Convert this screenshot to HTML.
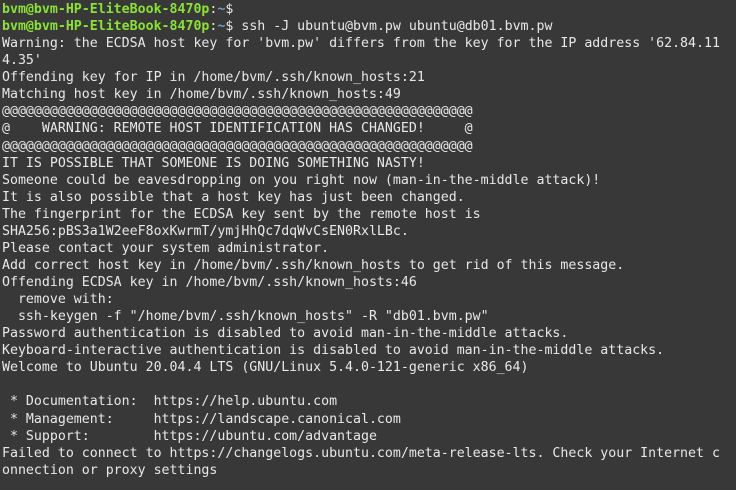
<!DOCTYPE html>
<html><head><meta charset="utf-8"><style>
html,body{margin:0;padding:0;background:#383838;width:736px;height:490px;overflow:hidden}
pre{margin:0;padding:1px 0 0 2px;font-family:"DejaVu Sans Mono","Liberation Mono",monospace;font-size:13.25px;line-height:17.07px;color:#e8e8e8;white-space:pre}
.g{color:#8ae234;font-weight:bold}
.b{color:#729fcf;font-weight:bold}
</style></head><body><pre><span class="g">bvm@bvm-HP-EliteBook-8470p</span>:<span class="b">~</span>$
<span class="g">bvm@bvm-HP-EliteBook-8470p</span>:<span class="b">~</span>$ ssh -J ubuntu@bvm.pw ubuntu@db01.bvm.pw
Warning: the ECDSA host key for 'bvm.pw' differs from the key for the IP address '62.84.11
4.35'
Offending key for IP in /home/bvm/.ssh/known_hosts:21
Matching host key in /home/bvm/.ssh/known_hosts:49
@@@@@@@@@@@@@@@@@@@@@@@@@@@@@@@@@@@@@@@@@@@@@@@@@@@@@@@@@@@
@    WARNING: REMOTE HOST IDENTIFICATION HAS CHANGED!     @
@@@@@@@@@@@@@@@@@@@@@@@@@@@@@@@@@@@@@@@@@@@@@@@@@@@@@@@@@@@
IT IS POSSIBLE THAT SOMEONE IS DOING SOMETHING NASTY!
Someone could be eavesdropping on you right now (man-in-the-middle attack)!
It is also possible that a host key has just been changed.
The fingerprint for the ECDSA key sent by the remote host is
SHA256:pBS3a1W2eeF8oxKwrmT/ymjHhQc7dqWvCsEN0RxlLBc.
Please contact your system administrator.
Add correct host key in /home/bvm/.ssh/known_hosts to get rid of this message.
Offending ECDSA key in /home/bvm/.ssh/known_hosts:46
  remove with:
  ssh-keygen -f "/home/bvm/.ssh/known_hosts" -R "db01.bvm.pw"
Password authentication is disabled to avoid man-in-the-middle attacks.
Keyboard-interactive authentication is disabled to avoid man-in-the-middle attacks.
Welcome to Ubuntu 20.04.4 LTS (GNU/Linux 5.4.0-121-generic x86_64)

 * Documentation:  https://help.ubuntu.com
 * Management:     https://landscape.canonical.com
 * Support:        https://ubuntu.com/advantage
Failed to connect to https://changelogs.ubuntu.com/meta-release-lts. Check your Internet c
onnection or proxy settings
</pre></body></html>
